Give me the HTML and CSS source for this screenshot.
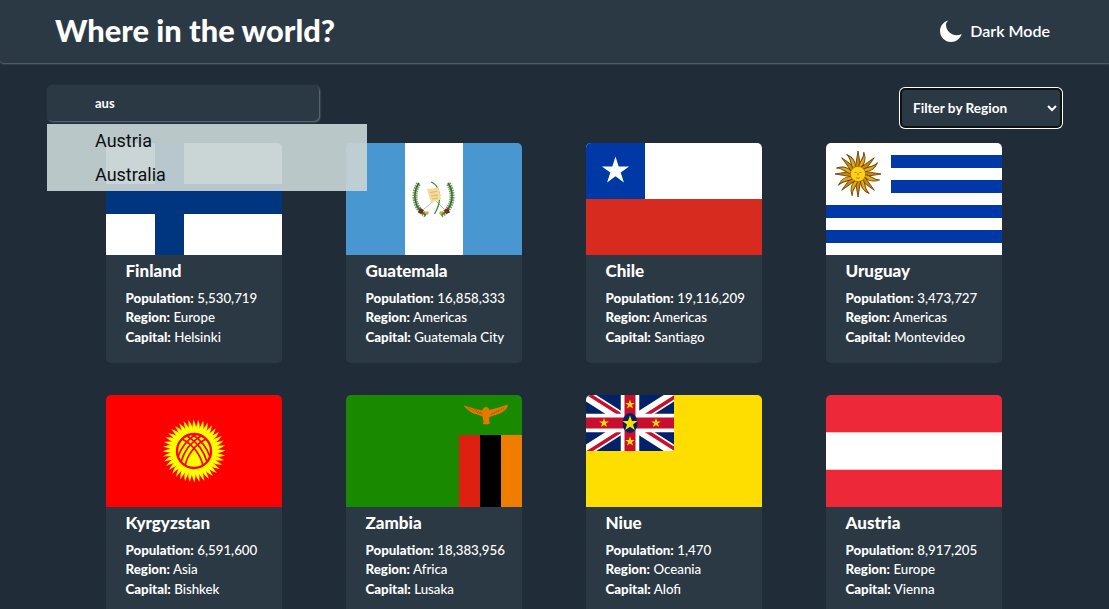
FILE: index.html
```html
<!DOCTYPE html>
<html lang="en">
<head>
<meta charset="utf-8">
<title>Where in the world?</title>
<link rel="stylesheet" href="styles.css">
</head>
<body>
<header class="topbar">
  <h1 class="brand">Where in the world?</h1>
  <button class="mode" type="button">
    <svg class="moon" viewBox="0 0 22 22" aria-hidden="true"><path d="M8.600 0.400C3.600 1.400 0 5.800 0 11c0 6 4.900 11 11 11 5 0 9.300-3.400 10.600-8-1.500.8-3.200 1.200-5 1.200-6 0-10.600-4.700-10.600-10.600 0-1.500.6-3 2.600-4.200z" fill="#fff"/></svg>
    <span>Dark Mode</span>
  </button>
</header>
<main class="page">
  <div class="toolbar">
    <div class="search">
      <input class="search-input" type="text" value="aus" aria-label="Search">
      <ul class="suggest">
        <li>Austria</li>
        <li>Australia</li>
      </ul>
    </div>
    <select class="filter" aria-label="Filter by Region">
      <option>Filter by Region</option>
    </select>
  </div>
  <section class="grid">
    <article class="card">
      <svg class="flag" viewBox="0 0 176 112" preserveAspectRatio="none"><rect width="176" height="112" fill="#fff"/><rect x="49" width="29" height="112" fill="#003580"/><rect y="41" width="176" height="30" fill="#003580"/></svg>
      <div class="info"><h2>Finland</h2>
        <p><b>Population:</b> 5,530,719</p><p><b>Region:</b> Europe</p><p><b>Capital:</b> Helsinki</p></div>
    </article>
    <article class="card">
      <svg class="flag" viewBox="0 0 176 112" preserveAspectRatio="none"><rect width="176" height="112" fill="#4997d0"/><rect x="59" width="58" height="112" fill="#fff"/>
        <g fill="none">
          <path d="M80 72C68 66 66 50 73 40" stroke="#6b9a5a" stroke-width="5" stroke-dasharray="1.500 .8"/>
          <path d="M95 72C107 66 109 50 102 40" stroke="#6b9a5a" stroke-width="5" stroke-dasharray="1.500 .8"/>
          <path d="M80 72C68 66 66 50 73 40M95 72C107 66 109 50 102 40" stroke="#3f6b2e" stroke-width="1.500"/>
          <path d="M78 66 95 52M98 66 84 52" stroke="#b9bcc0" stroke-width="1"/>
          <path d="M85 39c6 2 9 9 8.500 17-.3 6-2 10-5 15" stroke="#3f8a2e" stroke-width="1.300"/>
        </g>
        <path d="M81 46l11-1.500 1.500 4 1.500 8-10 3-1.500-5z" fill="#f3dc98"/>
        <path d="M84 49.500l7-1M85 53l7-1M86 56l6-1" stroke="#c9a95a" stroke-width=".7"/>
        <path d="M74 65l4 2-2 4-4-1.500zM102 65l-4 2 2 4 4-1.500z" fill="#7a2a1a"/>
        <circle cx="81" cy="70" r="1.700" fill="#d6a92e"/><circle cx="95" cy="70" r="1.700" fill="#d6a92e"/>
      </svg>
      <div class="info"><h2>Guatemala</h2>
        <p><b>Population:</b> 16,858,333</p><p><b>Region:</b> Americas</p><p><b>Capital:</b> Guatemala City</p></div>
    </article>
    <article class="card">
      <svg class="flag" viewBox="0 0 176 112" preserveAspectRatio="none"><rect width="176" height="56" fill="#fff"/><rect y="56" width="176" height="56" fill="#d72b1f"/><rect width="59" height="56" fill="#0039a6"/><path d="M29.500 13.500l3.200 9.900h10.400l-8.400 6.100 3.200 9.900-8.400-6.100-8.400 6.100 3.200-9.900-8.400-6.100h10.400z" fill="#fff"/></svg>
      <div class="info"><h2>Chile</h2>
        <p><b>Population:</b> 19,116,209</p><p><b>Region:</b> Americas</p><p><b>Capital:</b> Santiago</p></div>
    </article>
    <article class="card">
      <svg class="flag" viewBox="0 0 176 112" preserveAspectRatio="none"><rect width="176" height="112" fill="#fff"/>
        <path d="M65 12h111v13H65zM65 37h111v13H65zM0 62h176v13H0zM0 87h176v13H0z" fill="#0038a8"/>
        <defs>
          <g id="uy-pair">
            <path d="M-2.600-7 0-23 2.600-7z" fill="#c98a0a" stroke="#6e4205" stroke-width=".9"/>
            <path transform="rotate(22.500)" d="M-2.400-7c-1.300-5 2.600-9-.6-15.500 3.200 3.500 6 9.500 3 15.500z" fill="#e3ab12" stroke="#6e4205" stroke-width=".9"/>
          </g>
        </defs>
        <g transform="translate(32 31)">
          <use href="#uy-pair"/><use href="#uy-pair" transform="rotate(45)"/><use href="#uy-pair" transform="rotate(90)"/><use href="#uy-pair" transform="rotate(135)"/><use href="#uy-pair" transform="rotate(180)"/><use href="#uy-pair" transform="rotate(225)"/><use href="#uy-pair" transform="rotate(270)"/><use href="#uy-pair" transform="rotate(315)"/>
          <circle r="7.500" fill="#fcd116" stroke="#a8720c" stroke-width=".5"/>
          <path d="M-3.500-1.500h2M1.500-1.500h2M0-1v2.500M-2 3.500c1.300 1 2.700 1 4 0" fill="none" stroke="#9a6a0a" stroke-width=".7"/>
        </g>
      </svg>
      <div class="info"><h2>Uruguay</h2>
        <p><b>Population:</b> 3,473,727</p><p><b>Region:</b> Americas</p><p><b>Capital:</b> Montevideo</p></div>
    </article>
    <article class="card">
      <svg class="flag" viewBox="0 0 176 112" preserveAspectRatio="none"><rect width="176" height="112" fill="#f00"/>
        <defs>
          <path id="kg-ray" d="M-2-20C-1.800-25-.8-27.500-.8-31.500 1.200-28 2.400-25 2.200-20z" fill="#ff0"/>
          <g id="kg-five"><use href="#kg-ray"/><use href="#kg-ray" transform="rotate(9)"/><use href="#kg-ray" transform="rotate(18)"/><use href="#kg-ray" transform="rotate(27)"/><use href="#kg-ray" transform="rotate(36)"/></g>
        </defs>
        <g transform="translate(88 56)">
          <use href="#kg-five"/><use href="#kg-five" transform="rotate(45)"/><use href="#kg-five" transform="rotate(90)"/><use href="#kg-five" transform="rotate(135)"/><use href="#kg-five" transform="rotate(180)"/><use href="#kg-five" transform="rotate(225)"/><use href="#kg-five" transform="rotate(270)"/><use href="#kg-five" transform="rotate(315)"/>
          <circle r="20.500" fill="#ff0"/>
          <circle r="17" fill="#ff0" stroke="#f00" stroke-width="2.400"/>
          <g fill="none" stroke="#f00" stroke-width="1.700">
            <path d="M-16 6C-13-3-7-11 2-17M-13 11C-10 0-3-9 7-15M-9 15C-7 5 0-6 12-12"/>
            <path d="M16 6C13-3 7-11-2-17M13 11C10 0 3-9-7-15M9 15C7 5 0-6-12-12"/>
          </g>
        </g>
      </svg>
      <div class="info"><h2>Kyrgyzstan</h2>
        <p><b>Population:</b> 6,591,600</p><p><b>Region:</b> Asia</p><p><b>Capital:</b> Bishkek</p></div>
    </article>
    <article class="card">
      <svg class="flag" viewBox="0 0 176 112" preserveAspectRatio="none"><rect width="176" height="112" fill="#198a00"/>
        <rect x="113" y="40" width="21" height="72" fill="#de2010"/><rect x="134" y="40" width="21" height="72"/><rect x="155" y="40" width="21" height="72" fill="#ef7d00"/>
        <path d="M118 10.500c5 2 11 3 18 5 1.500-2.500 2-3.500 4-3.500 2 0 3 1.500 3.500 3 5-1 12-3 18-5.500 1 2-1 5-5 7.500-4.500 2.500-10 3.500-13 5l-.5 4.500 1.500 1.500-3.500 1.500-2.500-.5-1.500.5.500-3-1-5-5-2c-5-1-9.500-3.500-13.500-8.500z" fill="#e67800"/>
        <path d="M122 13l13 6M127 13l10 6M158 13l-12 6M153 15l-9 5" stroke="#a85500" stroke-width="1.200" stroke-dasharray="1 1" fill="none"/>
      </svg>
      <div class="info"><h2>Zambia</h2>
        <p><b>Population:</b> 18,383,956</p><p><b>Region:</b> Africa</p><p><b>Capital:</b> Lusaka</p></div>
    </article>
    <article class="card">
      <svg class="flag" viewBox="0 0 176 112" preserveAspectRatio="none"><rect width="176" height="112" fill="#fedd00"/>
        <defs>
          <clipPath id="nu-cut"><rect width="88" height="56"/></clipPath>
          <path id="nu-star" d="M0-5 1.200-1.600H4.800L1.900.600 3 4 0 2 -3 4-1.900.600-4.800-1.600H-1.200z" fill="#fedd00"/>
        </defs>
        <g clip-path="url(#nu-cut)">
          <rect width="88" height="56" fill="#012169"/>
          <path d="M0 0 88 56M88 0 0 56" stroke="#fff" stroke-width="11"/>
          <path d="M0 0 44 28M88 56 44 28" stroke="#c8102e" stroke-width="3.500" transform="translate(1.800 -1.200)"/>
          <path d="M88 0 44 28M0 56 44 28" stroke="#c8102e" stroke-width="3.500" transform="translate(1.800 1.200)"/>
          <path d="M44 0V56M0 28H88" stroke="#fff" stroke-width="18.500"/>
          <path d="M44 0V56M0 28H88" stroke="#c8102e" stroke-width="11"/>
          <ellipse cx="44" cy="28" rx="7.500" ry="10" fill="#012169"/>
          <path d="M44 20.500 46 26H51.500L47 29.500 48.700 35 44 31.700 39.300 35 41 29.500 36.500 26H42z" fill="#fedd00"/>
          <use href="#nu-star" x="44" y="9.500"/><use href="#nu-star" x="18" y="28"/><use href="#nu-star" x="70" y="28"/><use href="#nu-star" x="44" y="46.500"/>
        </g>
      </svg>
      <div class="info"><h2>Niue</h2>
        <p><b>Population:</b> 1,470</p><p><b>Region:</b> Oceania</p><p><b>Capital:</b> Alofi</p></div>
    </article>
    <article class="card">
      <svg class="flag" viewBox="0 0 176 112" preserveAspectRatio="none"><rect width="176" height="112" fill="#ed2939"/><rect y="37.300" width="176" height="37.400" fill="#fff"/></svg>
      <div class="info"><h2>Austria</h2>
        <p><b>Population:</b> 8,917,205</p><p><b>Region:</b> Europe</p><p><b>Capital:</b> Vienna</p></div>
    </article>
  </section>
</main>
</body>
</html>
```

FILE: styles.css
```css
* { box-sizing: border-box; }

html, body {
  margin: 0;
  height: 100%;
  overflow: hidden;
}

body {
  background: #202c37;
  color: #fff;
  font-family: Lato, "Noto Sans", sans-serif;
}

.topbar {
  display: flex;
  align-items: center;
  justify-content: space-between;
  height: 63px;
  padding: 0 59px 2px 55px;
  background: #2b3945;
  border-radius: 0 0 0 4px;
  box-shadow: 0 1px 2px rgba(255, 255, 255, .3);
}

.brand {
  margin: 0;
  padding-top: 2px;
  font-size: 30.800px;
  font-weight: 900;
  line-height: 1;
}

.mode {
  display: flex;
  align-items: center;
  gap: 8px;
  padding: 0;
  border: 0;
  background: none;
  color: #fff;
  font: 600 16px Lato, sans-serif;
}

.moon {
  display: block;
  width: 22px;
  height: 22px;
}

.toolbar {
  display: flex;
  justify-content: space-between;
  align-items: flex-start;
  padding: 22px 47px 0;
  margin-bottom: 15px;
}

.search {
  position: relative;
  z-index: 2;
}

.search-input {
  display: block;
  width: 272px;
  height: 36px;
  padding: 0 0 0 48px;
  border: 0;
  border-radius: 5px;
  outline: 0;
  background: #2b3945;
  color: #fff;
  font: 700 13px Lato, sans-serif;
  box-shadow: 1px 1px 2px rgba(255, 255, 255, .35);
}

.suggest {
  position: absolute;
  top: 39px;
  left: 0;
  width: 320px;
  margin: 0;
  padding: 0 0 0 48px;
  list-style: none;
  background: rgba(198, 211, 211, .93);
  color: #0a0f14;
  font: 400 18px/33.500px Roboto, sans-serif;
}

.filter {
  display: block;
  width: 162px;
  height: 40px;
  margin-top: 3px;
  padding: 0 0 0 7px;
  border: 2px solid #0d1114;
  border-radius: 5px;
  background-color: #2b3945;
  color: #fff;
  font: 700 13.600px Lato, sans-serif;
  box-shadow: 0 0 0 1px #fff;
}

.grid {
  display: grid;
  grid-template-columns: repeat(4, 176px);
  gap: 32px 64px;
  padding-left: 106px;
}

.card {
  height: 220px;
  overflow: hidden;
  border-radius: 5px;
  background: #2b3945;
}

.flag {
  display: block;
  width: 176px;
  height: 112px;
}

.info {
  padding: 6px 0 0 19.500px;
}

.info h2 {
  margin: 0 0 7.500px;
  font-size: 17px;
  font-weight: 900;
  line-height: 20px;
}

.info p {
  margin: 0;
  font-size: 13.300px;
  font-weight: 500;
  line-height: 19.500px;
  white-space: nowrap;
}

.info b {
  font-weight: 900;
}
```
